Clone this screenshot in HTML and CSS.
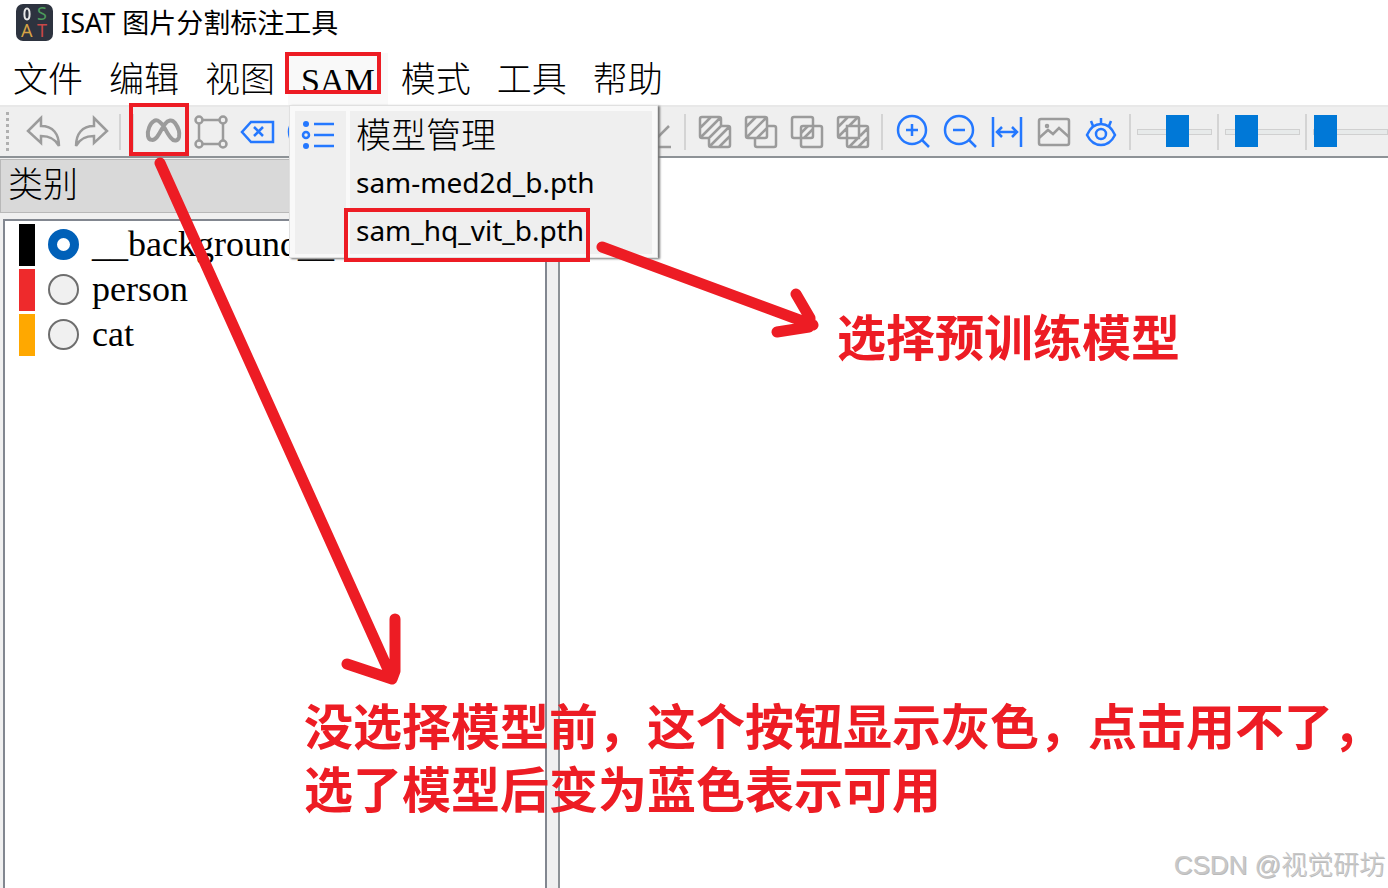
FILE: index.html
```html
<!DOCTYPE html>
<html lang="zh-CN">
<head>
<meta charset="utf-8">
<title>ISAT 图片分割标注工具</title>
<link rel="stylesheet" href="styles.css">
</head>
<body>
<div class="app">
  <header class="titlebar">
    <svg class="logo" viewBox="0 0 37 37" aria-hidden="true">
      <rect x="0" y="0" width="37" height="37" rx="7" fill="#2d333f"/>
      <ellipse cx="11" cy="10" rx="2.600" ry="5.500" fill="none" stroke="#e8e8e8" stroke-width="2"/>
      <text x="21" y="16" fill="#4c9a5b">S</text>
      <text x="5" y="33" fill="#d6a345">A</text>
      <text x="21" y="33" fill="#c94848">T</text>
    </svg>
    <h1 class="title">ISAT 图片分割标注工具</h1>
  </header>

  <nav class="menubar">
    <button class="menu-item">文件</button>
    <button class="menu-item">编辑</button>
    <button class="menu-item">视图</button>
    <button class="menu-item active">SAM</button>
    <button class="menu-item">模式</button>
    <button class="menu-item">工具</button>
    <button class="menu-item">帮助</button>
  </nav>

  <div class="toolbar">
    <span class="grip"></span>
    <button class="tool" aria-label="撤销"><svg viewBox="0 0 34 34"><path d="M14 3 1 16l13 12v-7c8 0 14 2 18 10 0-12-6-20-18-20z"/></svg></button>
    <button class="tool" aria-label="重做"><svg viewBox="0 0 34 34"><path d="M20 3l13 13-13 12v-7c-8 0-14 2-18 10 0-12 6-20 18-20z"/></svg></button>
    <span class="sep"></span>
    <span class="sep"></span>
    <button class="tool" aria-label="SAM 分割"><svg viewBox="0 0 34 34"><path class="heavy" d="M17 12C13 6 10 4 7 6 3 8 0 16 1 21c1 5 6 5 9 1 3-4 5-9 8-13 3-4 7-5 10-1 3 4 5 9 4 14-1 4-5 5-8 1-3-3-5-8-7-11"/></svg></button>
    <button class="tool" aria-label="多边形"><svg viewBox="0 0 34 34"><path d="M8 5h18M8 29h18M5 8v18M29 8v18"/><circle cx="5" cy="5" r="3.500"/><circle cx="29" cy="5" r="3.500"/><circle cx="5" cy="29" r="3.500"/><circle cx="29" cy="29" r="3.500"/></svg></button>
    <button class="tool blue" aria-label="回退"><svg viewBox="0 0 34 34"><path d="M10 7h22v20H10L1 17zM13 12l9 9M22 12l-9 9"/></svg></button>
    <button class="tool blue" aria-label="完成"><svg viewBox="0 0 34 34"><circle cx="17" cy="17" r="16"/></svg></button>
    <button class="tool save" aria-label="保存"><svg viewBox="0 0 34 34"><path d="M17 3v20M5 13l12 11 13-13M3 32h29"/></svg></button>
    <span class="sep"></span>
    <div class="tight">
      <button class="tool" aria-label="并集"><svg viewBox="0 0 34 34"><path d="M4 2h17q2 0 2 2v7h7q2 0 2 2v17q0 2-2 2H13q-2 0-2-2v-7H4q-2 0-2-2V4q0-2 2-2zM2 13 13 2M3 22 22 3M11 23l12-12M11 32 32 11M21 32l11-11"/></svg></button>
      <button class="tool" aria-label="差集"><svg viewBox="0 0 34 34"><path d="M4 2h17q2 0 2 2v17q0 2-2 2H4q-2 0-2-2V4q0-2 2-2zM2 12 12 2M3 22 22 3M13 23l10-10M23 11h7q2 0 2 2v17q0 2-2 2H13q-2 0-2-2v-7"/></svg></button>
      <button class="tool" aria-label="交集"><svg viewBox="0 0 34 34"><rect x="2" y="2" width="21" height="21" rx="2"/><rect x="11" y="11" width="21" height="21" rx="2"/><path d="M11 18l7-7M14 23l9-9"/></svg></button>
      <button class="tool" aria-label="异或"><svg viewBox="0 0 34 34"><path d="M4 2h17q2 0 2 2v7h7q2 0 2 2v17q0 2-2 2H13q-2 0-2-2v-7H4q-2 0-2-2V4q0-2 2-2zM11 11h12v12H11zM2 12 12 2M3 21l8-8M13 11l8-8M13 32l9-9M24 21l8-8M22 32l10-10"/></svg></button>
    </div>
    <span class="sep"></span>
    <button class="tool blue" aria-label="放大"><svg viewBox="0 0 34 34"><circle cx="16" cy="15" r="14"/><path d="M26 25l7 7M16 9v12M10 15h12"/></svg></button>
    <button class="tool blue" aria-label="缩小"><svg viewBox="0 0 34 34"><circle cx="16" cy="15" r="14"/><path d="M26 25l7 7M10 15h12"/></svg></button>
    <button class="tool blue" aria-label="适应窗口"><svg viewBox="0 0 34 34"><path d="M3 2v30M31 2v30M8 17h18M12 12l-5 5 5 5M22 12l5 5-5 5"/></svg></button>
    <button class="tool" aria-label="图像"><svg viewBox="0 0 34 34"><rect x="2" y="4" width="30" height="26" rx="2"/><path d="M2 23l9-8 5 4 6-6 10 9"/><circle cx="10" cy="11" r="1"/></svg></button>
    <button class="tool blue" aria-label="显示"><svg viewBox="0 0 34 34"><path d="M3 20C7 11 12 9 17 9s10 2 14 11c-4 8-9 10-14 10S7 28 3 20zM17 9V3M9 11 7 6M25 11l2-5"/><circle cx="17" cy="19" r="5"/></svg></button>
    <span class="sep"></span>
    <input class="slider" type="range" min="0" max="100" value="57" aria-label="遮罩透明度">
    <span class="sep"></span>
    <input class="slider" type="range" min="0" max="100" value="18" aria-label="顶点大小">
    <span class="sep"></span>
    <input class="slider" type="range" min="0" max="100" value="0" aria-label="线宽">
  </div>

  <main class="workspace">
    <aside class="dock">
      <h2 class="dock-title">类别</h2>
      <div class="list">
        <label class="row"><span class="swatch black"></span><input type="radio" name="category" checked>__background__</label>
        <label class="row"><span class="swatch red"></span><input type="radio" name="category">person</label>
        <label class="row"><span class="swatch orange"></span><input type="radio" name="category">cat</label>
      </div>
    </aside>
    <section class="canvas"></section>
  </main>

  <div class="popup">
    <button class="option"><span class="option-icon"><svg viewBox="0 0 34 30"><path d="M13 4h20M13 15h20M13 26h20"/><circle class="dot" cx="5" cy="4" r="3"/><circle cx="5" cy="15" r="3"/><circle class="dot" cx="5" cy="26" r="3"/></svg></span><span class="option-text cjk">模型管理</span></button>
    <button class="option"><span class="option-icon"></span><span class="option-text">sam-med2d_b.pth</span></button>
    <button class="option"><span class="option-icon"></span><span class="option-text">sam_hq_vit_b.pth</span></button>
  </div>

  <svg class="marks" aria-hidden="true">
    <g class="boxes">
      <rect x="287" y="54" width="92" height="38"/>
      <rect x="131" y="105" width="56" height="49"/>
      <rect x="346" y="210" width="242" height="50"/>
    </g>
    <g class="arrows">
      <path d="M160 163 391 676M347 664l45 15M395 619v52l-3 8"/>
      <path d="M602 247 813 325M796 294l14 24v7M777 332l32-5"/>
    </g>
  </svg>
  <p class="note note-model">选择预训练模型</p>
  <p class="note note-button">没选择模型前，这个按钮显示灰色，点击用不了，<br>选了模型后变为蓝色表示可用</p>
  <p class="watermark">CSDN @视觉研坊</p>
</div>
</body>
</html>
```
FILE: styles.css
```css
* { box-sizing: border-box; }
body { margin: 0; background: #fff; color: #000; }
h1, h2, p { margin: 0; font-weight: 400; }
button { border: 0; padding: 0; background: none; color: inherit; font: inherit; }
svg { display: block; }

.app {
  position: relative;
  display: flex;
  flex-direction: column;
  min-height: 100vh;
  overflow: hidden;
  font-family: "Liberation Serif", "Noto Sans CJK SC", serif;
}

.titlebar { display: flex; align-items: center; gap: 8px; height: 44px; padding-left: 16px; }
.logo { width: 37px; height: 37px; overflow: visible; font: 18px "Noto Sans", sans-serif; }
.title { padding-top: 2px; font: 27px/40px "Noto Sans", "Noto Sans CJK SC", sans-serif; }

.menubar { display: flex; height: 61px; padding-top: 9px; }
.menu-item { padding: 3px 13px 0; font-size: 35px; font-weight: 300; line-height: 49px; }
.menu-item.active { background: #f9f9f9; font-size: 34px; font-weight: 400; }

.toolbar {
  display: flex;
  align-items: center;
  height: 53px;
  overflow: hidden;
  background: #efefef;
  border-top: 2px solid #e8e8e8;
  border-bottom: 2px solid #8d9296;
}
.toolbar > * { flex: none; }
.grip { width: 3px; height: 39px; margin: 0 11px 0 6px; background: repeating-linear-gradient(#b0b0b0 0 3px, #efefef 3px 6px); }
.tool { display: flex; justify-content: center; width: 47px; }
.tool svg { width: 34px; height: 34px; overflow: visible; fill: none; stroke: #9b9b9b; stroke-width: 2.5; }
.tool .heavy { stroke-width: 4; }
.tool.blue svg { stroke: #2478ff; }
.save { margin-left: 304px; }
.tight { display: flex; }
.tight .tool { width: 46px; }
.sep { width: 2px; height: 36px; margin: 0 6px 0 5px; background: #d4d4d4; }

.slider { appearance: none; width: 75px; height: 32px; margin: 0; background: none; }
.slider::-webkit-slider-runnable-track { height: 6px; background: #e7eaea; border: 1px solid #d0d0d0; }
.slider::-webkit-slider-thumb { appearance: none; width: 23px; height: 32px; margin-top: -15px; background: #0078d7; }

.workspace { flex: 1; display: flex; background: #f0f0f0; }
.dock { display: flex; flex-direction: column; flex: 0 0 547px; padding-top: 1px; }
.dock-title { height: 54px; padding-left: 7px; border: 1px solid #b8b8b8; background: #d9d9d9; font-size: 35px; font-weight: 300; line-height: 52px; }
.list { flex: 1; margin: 6px 0 0 3px; padding: 1px 0 0 14px; background: #fff; border: solid #828790; border-width: 2px 2px 0 2px; }
.row { display: flex; align-items: center; height: 45px; font-size: 36px; line-height: 45px; }
.swatch { width: 16px; height: 42px; margin-right: 13px; }
.black { background: #000; }
.red { background: #ee2a2c; }
.orange { background: #ffa800; }
.row input { appearance: none; width: 31px; height: 31px; margin: 0 13px 0 0; border: 2px solid #6e6e6e; border-radius: 50%; background: #f0f0f0; }
.row input:checked { border: 9px solid #0060b8; background: #fff; }
.canvas { flex: 1; margin-left: 11px; background: #fff; border-left: 2px solid #8d9296; }

.popup {
  position: absolute;
  left: 289px;
  top: 105px;
  width: 369px;
  padding: 5px 5px 3px;
  border: 1px solid #e0e0e0;
  background: linear-gradient(90deg, #efefef 51px, #f9f9f9 51px 55px, #efefef 55px) content-box, #f9f9f9;
  box-shadow: 2px 1px 2px #777;
}
.option { display: flex; align-items: center; width: 100%; height: 48px; text-align: left; }
.option:first-child { height: 47px; }
.option-icon { flex: none; width: 61px; padding-left: 6px; }
.option-icon svg { width: 34px; height: 30px; fill: none; stroke: #2478ff; stroke-width: 2.5; }
.option-icon .dot { fill: #2478ff; stroke: none; }
.option-text { font: 28px/44px "Noto Sans", sans-serif; }
.option-text.cjk { padding-bottom: 4px; font: 300 35px/42px "Noto Sans CJK SC", sans-serif; }

.marks { position: absolute; left: 0; top: 0; width: 100%; height: 100%; fill: none; stroke: #ed1c24; pointer-events: none; }
.boxes { stroke-width: 4; }
.arrows { stroke-width: 11; stroke-linecap: round; stroke-linejoin: round; }
.note { position: absolute; color: #ed1c24; font: 700 49px/63px "Noto Sans CJK SC", sans-serif; white-space: nowrap; }
.note-model { left: 837px; top: 303px; }
.note-button { left: 304px; top: 692px; }
.watermark { position: absolute; right: 3px; bottom: 3px; color: #c8c8c8; font: 300 26px/40px "Liberation Sans", "Noto Sans CJK SC", sans-serif; text-shadow: 1px 1px 0 #bbb; }
```
